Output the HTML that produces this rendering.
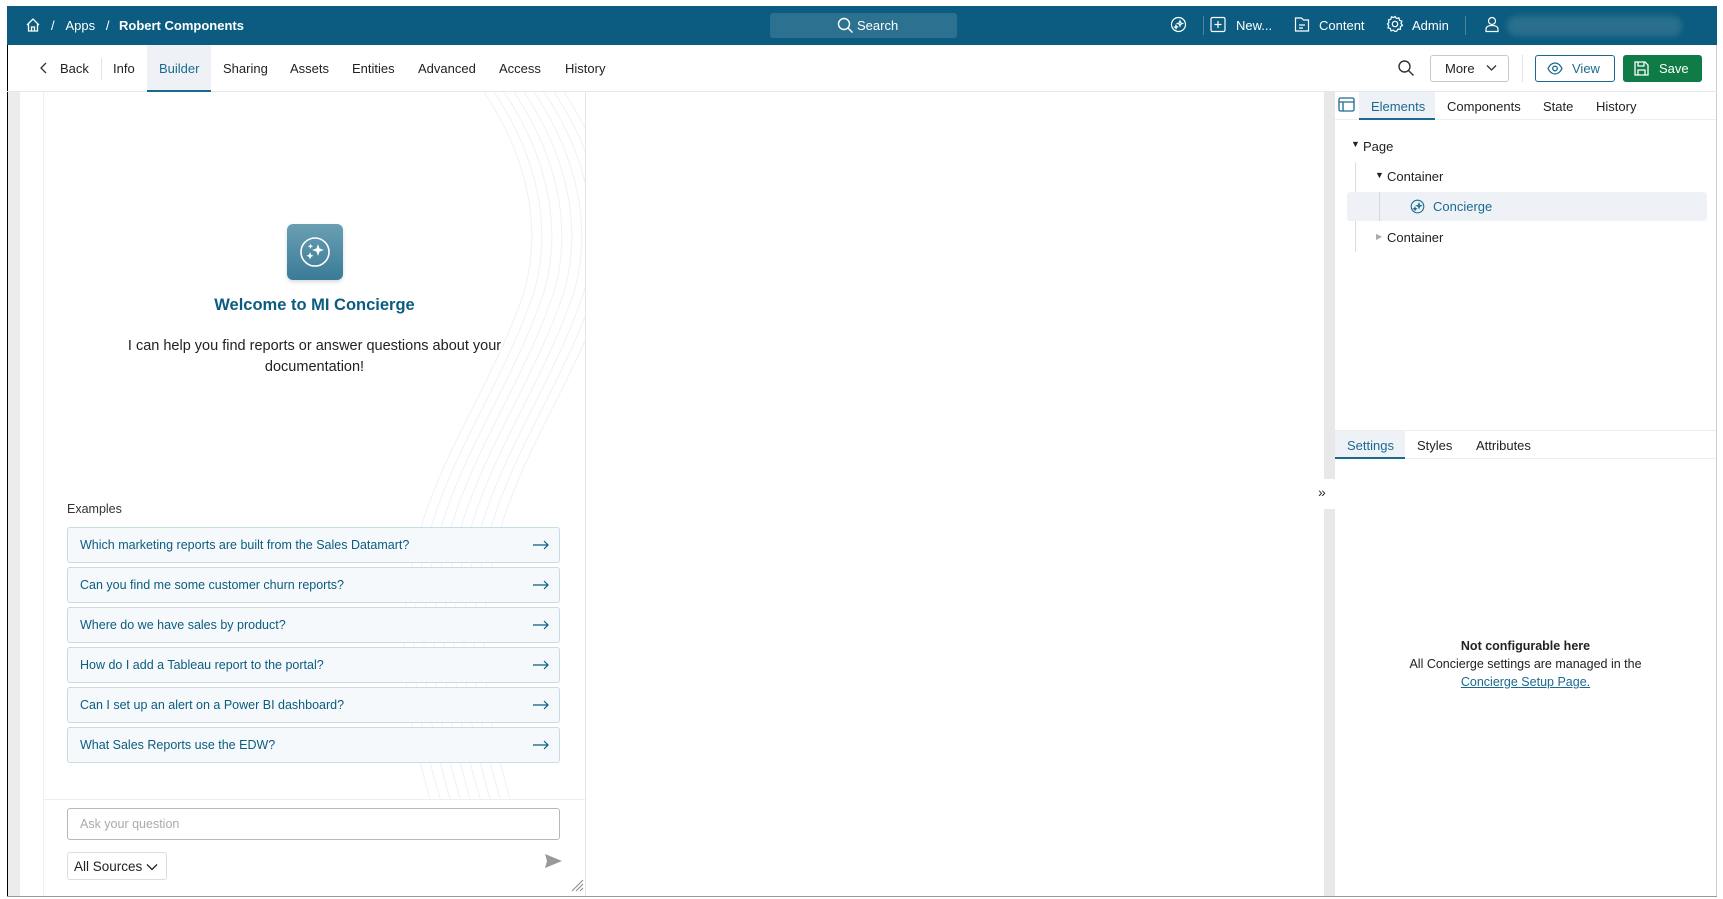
<!DOCTYPE html>
<html><head><meta charset="utf-8"><style>
*{box-sizing:border-box;margin:0;padding:0}
body{width:1723px;height:899px;background:#fff;font-family:"Liberation Sans",sans-serif;position:relative;overflow:hidden;color:#222}
.a{position:absolute}
.top{left:7px;top:6px;width:1710px;height:39px;background:#0b5c80;color:#fff;font-size:13px}
.nav{left:7px;top:45px;width:1710px;height:47px;border-bottom:1px solid #e5e7ea;font-size:13px;color:#222}
.nav span{position:absolute;top:16px}
.t{white-space:nowrap}
.ex{position:absolute;left:67px;width:493px;height:36px;border:1px solid #c9dbe3;border-radius:3px;background:#f6f9fb;color:#0b5c80;font-size:12.5px;padding:10px 12px}
.ex svg{position:absolute;right:9px;top:12px}
</style></head><body>
<div class="a" style="left:7px;top:6px;width:1px;height:890px;background:#000"></div>
<div class="a" style="left:1716px;top:6px;width:1px;height:890px;background:#ccc"></div>
<div class="a" style="left:7px;top:896px;width:1710px;height:1px;background:#999"></div>

<div class="a top">
<svg class="a" style="left:18px;top:11px" width="16" height="16" viewBox="0 0 16 16" fill="none" stroke="#fff" stroke-width="1.3"><path d="M2 8L8 2l6 6M3.5 6.5V14h9V6.5M6.5 14V10h3v4"/></svg>
<span class="a t" style="left:44px;top:12px">/&nbsp;&nbsp;&nbsp;Apps&nbsp;&nbsp;&nbsp;/</span>
<span class="a t" style="left:112px;top:12px;font-weight:bold">Robert Components</span>
<div class="a" style="left:763px;top:7px;width:187px;height:25px;background:#2c718f;border-radius:3px"></div>
<svg class="a" style="left:830px;top:11px" width="17" height="17" viewBox="0 0 17 17" fill="none" stroke="#fff" stroke-width="1.4"><circle cx="7" cy="7" r="5.5"/><path d="M11 11l4.5 4.5"/></svg>
<span class="a t" style="left:850px;top:12px">Search</span>
<svg class="a" style="left:1163px;top:10px" width="17" height="17" viewBox="0 0 17 17" fill="none" stroke="#fff" stroke-width="1.2"><circle cx="8.5" cy="8.5" r="7"/><path d="M10 5l.7 1.8 1.8.7-1.8.7L10 10l-.7-1.8-1.8-.7 1.8-.7zM6 9.5l.4 1 1 .4-1 .4L6 12.5l-.4-1-1-.4 1-.4z"/></svg>
<div class="a" style="left:1196px;top:10px;width:1px;height:19px;background:#4b85a0"></div>
<svg class="a" style="left:1203px;top:10px" width="16" height="17" viewBox="0 0 16 17" fill="none" stroke="#fff" stroke-width="1.2"><rect x="1" y="1.5" width="14" height="14" rx="1.5"/><path d="M8 5v7M4.5 8.5h7"/></svg>
<span class="a t" style="left:1229px;top:12px">New...</span>
<svg class="a" style="left:1287px;top:10px" width="16" height="17" viewBox="0 0 16 17" fill="none" stroke="#fff" stroke-width="1.2"><path d="M1.5 2h6l2 2h5v11h-13zM5 9h6M5 12h4"/></svg>
<span class="a t" style="left:1312px;top:12px">Content</span>
<svg class="a" style="left:1379px;top:9px" width="18" height="18" viewBox="0 0 18 18" fill="none" stroke="#fff" stroke-width="1.2"><circle cx="9" cy="9" r="2.7"/><path d="M9 1.5l1.5 2 2.4-.6.6 2.4 2.4.9-.9 2.3 1.5 1.9-2.1 1.3.1 2.5-2.5-.1-1.3 2.1L9 16.5l-1.7-1.3-2.3.7-.6-2.4-2.4-.7.7-2.4L1.5 9l1.5-1.7-.6-2.4 2.4-.6.6-2.4 2.4.6z"/></svg>
<span class="a t" style="left:1405px;top:12px">Admin</span>
<div class="a" style="left:1458px;top:10px;width:1px;height:19px;background:#4b85a0"></div>
<svg class="a" style="left:1477px;top:10px" width="16" height="17" viewBox="0 0 16 17" fill="none" stroke="#fff" stroke-width="1.2"><circle cx="8" cy="5" r="3.5"/><path d="M2 15.5v-2.5c0-2 2-3.5 6-3.5s6 1.5 6 3.5v2.5z"/></svg>
<div class="a" style="left:1500px;top:10px;width:175px;height:20px;background:#2a6f8d;border-radius:10px;filter:blur(3px)"></div>
</div>

<div class="a nav">
<svg class="a" style="left:32px;top:17px" width="10" height="12" viewBox="0 0 10 12" fill="none" stroke="#333" stroke-width="1.3"><path d="M7 1L2 6l5 5"/></svg>
<span style="left:53px">Back</span>
<div class="a" style="left:94px;top:13px;width:1px;height:22px;background:#e2e2e2"></div>
<span style="left:106px">Info</span>
<div class="a" style="left:140px;top:0;width:64px;height:47px;background:#eef2f6;border-bottom:2px solid #1a6a90"></div>
<span style="left:152px;color:#1a6a90">Builder</span>
<span style="left:216px">Sharing</span>
<span style="left:283px">Assets</span>
<span style="left:345px">Entities</span>
<span style="left:411px">Advanced</span>
<span style="left:492px">Access</span>
<span style="left:558px">History</span>
<svg class="a" style="left:1390px;top:14px" width="18" height="18" viewBox="0 0 18 18" fill="none" stroke="#333" stroke-width="1.4"><circle cx="7.5" cy="7.5" r="5.5"/><path d="M11.5 11.5l5 5"/></svg>
<div class="a" style="left:1423px;top:10px;width:79px;height:27px;border:1px solid #c8c8c8;border-radius:3px"></div>
<span style="left:1438px">More</span>
<svg class="a" style="left:1479px;top:19px" width="11" height="8" viewBox="0 0 11 8" fill="none" stroke="#333" stroke-width="1.3"><path d="M1 1.5l4.5 4.5L10 1.5"/></svg>
<div class="a" style="left:1515px;top:10px;width:1px;height:27px;background:#e2e2e2"></div>
<div class="a" style="left:1528px;top:10px;width:80px;height:27px;border:1px solid #1a6a90;border-radius:3px"></div>
<svg class="a" style="left:1540px;top:17px" width="16" height="13" viewBox="0 0 16 13" fill="none" stroke="#1a6a90" stroke-width="1.3"><path d="M1 6.5C3 2.5 5.5 1 8 1s5 1.5 7 5.5C13 10.5 10.5 12 8 12S3 10.5 1 6.5z"/><circle cx="8" cy="6.5" r="2.3"/></svg>
<span style="left:1565px;color:#1a6a90">View</span>
<div class="a" style="left:1616px;top:10px;width:79px;height:27px;background:#0f7b46;border-radius:3px"></div>
<svg class="a" style="left:1627px;top:16px" width="15" height="15" viewBox="0 0 15 15" fill="none" stroke="#fff" stroke-width="1.3"><path d="M1 1h10l3 3v10H1zM4 1v4h6V1M4 14V9h7v5"/></svg>
<span style="left:1652px;color:#fff">Save</span>
</div>

<!-- canvas -->
<div class="a" style="left:8px;top:92px;width:12px;height:804px;background:#ececec"></div>
<div class="a" style="left:43px;top:92px;width:543px;height:804px;border-left:1px solid #eee;border-right:1px solid #e6e6e6;overflow:hidden">
<svg class="a" style="left:0;top:0" width="543" height="804" fill="none" stroke="#eef2f4" stroke-width="1">
<g>
<path d="M440 0c40 60 60 130 40 200-40 120-120 200-120 350 0 100 40 200 60 254"/>
<path d="M450 0c40 60 60 130 40 200-40 120-120 200-120 350 0 100 40 200 60 254"/>
<path d="M460 0c40 60 60 130 40 200-40 120-120 200-120 350 0 100 40 200 60 254"/>
<path d="M470 0c40 60 60 130 40 200-40 120-120 200-120 350 0 100 40 200 60 254"/>
<path d="M480 0c40 60 60 130 40 200-40 120-120 200-120 350 0 100 40 200 60 254"/>
<path d="M490 0c40 60 60 130 40 200-40 120-120 200-120 350 0 100 40 200 60 254"/>
<path d="M500 0c40 60 60 130 40 200-40 120-120 200-120 350 0 100 40 200 60 254"/>
<path d="M510 0c40 60 60 130 40 200-40 120-120 200-120 350 0 100 40 200 60 254"/>
<path d="M520 0c40 60 60 130 40 200-40 120-120 200-120 350 0 100 40 200 60 254"/>
</g></svg>
<div class="a" style="left:243px;top:132px;width:56px;height:56px;border-radius:6px;background:linear-gradient(#6a9fb3,#3a7b97);box-shadow:0 2px 4px rgba(0,0,0,.15)"></div>
<svg class="a" style="left:253px;top:142px" width="36" height="36" viewBox="0 0 36 36" fill="none" stroke="#fff" stroke-width="1.6"><circle cx="18" cy="18" r="14"/><path d="M21 11l1.3 3.7 3.7 1.3-3.7 1.3L21 21l-1.3-3.7-3.7-1.3 3.7-1.3zM13 19l.8 2 2 .8-2 .8-.8 2-.8-2-2-.8 2-.8zM13.5 10.5l.5 1.3 1.3.5-1.3.5-.5 1.3-.5-1.3-1.3-.5 1.3-.5z" fill="#fff" stroke-width=".6"/></svg>
<div class="a t" style="left:0;width:541px;top:204px;text-align:center;font-size:16.5px;font-weight:bold;color:#0b5c80">Welcome to MI Concierge</div>
<div class="a" style="left:0;width:541px;top:244px;text-align:center;font-size:14.5px;line-height:21px;color:#222">I can help you find reports or answer questions about your<br>documentation!</div>
<div class="a" style="left:23px;top:410px;font-size:12.5px;color:#333">Examples</div>
<div class="a" style="left:0;top:707px;width:541px;height:97px;background:#fff;border-top:1px solid #eee"></div>
</div>
<div class="ex" style="top:527px">Which marketing reports are built from the Sales Datamart?<svg width="18" height="10" viewBox="0 0 18 10" fill="none" stroke="#0b5c80" stroke-width="1.2"><path d="M1 5h15M12 1l4 4-4 4"/></svg></div>
<div class="ex" style="top:567px">Can you find me some customer churn reports?<svg width="18" height="10" viewBox="0 0 18 10" fill="none" stroke="#0b5c80" stroke-width="1.2"><path d="M1 5h15M12 1l4 4-4 4"/></svg></div>
<div class="ex" style="top:607px">Where do we have sales by product?<svg width="18" height="10" viewBox="0 0 18 10" fill="none" stroke="#0b5c80" stroke-width="1.2"><path d="M1 5h15M12 1l4 4-4 4"/></svg></div>
<div class="ex" style="top:647px">How do I add a Tableau report to the portal?<svg width="18" height="10" viewBox="0 0 18 10" fill="none" stroke="#0b5c80" stroke-width="1.2"><path d="M1 5h15M12 1l4 4-4 4"/></svg></div>
<div class="ex" style="top:687px">Can I set up an alert on a Power BI dashboard?<svg width="18" height="10" viewBox="0 0 18 10" fill="none" stroke="#0b5c80" stroke-width="1.2"><path d="M1 5h15M12 1l4 4-4 4"/></svg></div>
<div class="ex" style="top:727px">What Sales Reports use the EDW?<svg width="18" height="10" viewBox="0 0 18 10" fill="none" stroke="#0b5c80" stroke-width="1.2"><path d="M1 5h15M12 1l4 4-4 4"/></svg></div>
<div class="a" style="left:67px;top:808px;width:493px;height:32px;border:1px solid #b8b8b8;border-radius:3px;font-size:12.5px;color:#aaa;padding:8px 12px">Ask your question</div>
<div class="a t" style="left:67px;top:852px;width:100px;height:28px;border:1px solid #ddd;border-radius:3px;font-size:13.5px;color:#222;padding:6px 6px">All Sources <svg width="12" height="8" viewBox="0 0 12 8" fill="none" stroke="#222" stroke-width="1.3"><path d="M1 1.5l5 5 5-5"/></svg></div>
<svg class="a" style="left:545px;top:854px" width="17" height="14" viewBox="0 0 17 14"><path d="M0 0l17 7-17 7 2-7z" fill="#999"/></svg>
<svg class="a" style="left:570px;top:878px" width="14" height="14" viewBox="0 0 14 14" stroke="#888" stroke-width="1"><path d="M13 2L2 13M13 6L6 13M13 10l-3 3"/></svg>

<!-- right side -->
<div class="a" style="left:1324px;top:92px;width:11px;height:804px;background:#e8e8e8"></div>
<div class="a" style="left:1313px;top:479px;width:22px;height:30px;background:#fff"></div>
<div class="a" style="left:1318px;top:484px;font-size:14px;color:#333">»</div>
<div class="a" style="left:1335px;top:92px;width:381px;height:804px;background:#fff"></div>
<div class="a" style="left:1335px;top:119px;width:381px;height:1px;background:#eee"></div>
<svg class="a" style="left:1338px;top:97px" width="17" height="15" viewBox="0 0 17 15" fill="none" stroke="#1a6a90" stroke-width="1.3"><rect x="1" y="1" width="15" height="13" rx="1.5"/><path d="M1 5h15M5 5v9"/></svg>
<div class="a" style="left:1359px;top:92px;width:76px;height:28px;background:#eef2f6;border-bottom:2px solid #1a6a90"></div>
<div class="a t" style="left:1371px;top:99px;font-size:13px;color:#1a6a90">Elements</div>
<div class="a t" style="left:1447px;top:99px;font-size:13px">Components</div>
<div class="a t" style="left:1543px;top:99px;font-size:13px">State</div>
<div class="a t" style="left:1596px;top:99px;font-size:13px">History</div>
<div class="a" style="left:1351px;top:139px;font-size:9px">▼</div>
<div class="a t" style="left:1363px;top:139px;font-size:13px">Page</div>
<div class="a" style="left:1355px;top:162px;width:1px;height:90px;background:#ddd"></div>
<div class="a" style="left:1375px;top:170px;font-size:9px">▼</div>
<div class="a t" style="left:1387px;top:169px;font-size:13px">Container</div>
<div class="a" style="left:1347px;top:192px;width:360px;height:29px;background:#eef2f6;border-radius:3px"></div>
<div class="a" style="left:1379px;top:192px;width:1px;height:29px;background:#d5d9dd"></div>
<svg class="a" style="left:1410px;top:199px" width="15" height="15" viewBox="0 0 15 15" fill="none" stroke="#1a6a90" stroke-width="1.1"><circle cx="7.5" cy="7.5" r="6.3"/><path d="M9 4.5l.6 1.6 1.6.6-1.6.6L9 9l-.6-1.6-1.6-.6 1.6-.6zM5 8.5l.4.9.9.4-.9.4-.4.9-.4-.9-.9-.4.9-.4z"/></svg>
<div class="a t" style="left:1433px;top:199px;font-size:13px;color:#1a6a90">Concierge</div>
<div class="a" style="left:1376px;top:232px;font-size:8px;color:#aaa">▶</div>
<div class="a t" style="left:1387px;top:230px;font-size:13px">Container</div>
<div class="a" style="left:1335px;top:430px;width:381px;height:1px;background:#eee"></div>
<div class="a" style="left:1335px;top:458px;width:381px;height:1px;background:#eee"></div>
<div class="a" style="left:1335px;top:431px;width:70px;height:28px;background:#eef2f6;border-bottom:2px solid #1a6a90"></div>
<div class="a t" style="left:1347px;top:438px;font-size:13px;color:#1a6a90">Settings</div>
<div class="a t" style="left:1417px;top:438px;font-size:13px">Styles</div>
<div class="a t" style="left:1476px;top:438px;font-size:13px">Attributes</div>
<div class="a" style="left:1335px;top:637px;width:381px;text-align:center;font-size:12.5px;line-height:18px">
<b>Not configurable here</b><br>All Concierge settings are managed in the<br><span style="color:#1a6a90;text-decoration:underline">Concierge Setup Page.</span></div>
</body></html>
